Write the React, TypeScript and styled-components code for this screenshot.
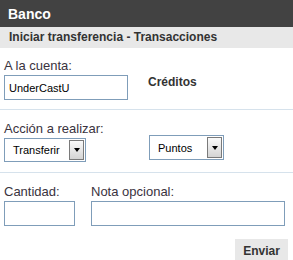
import styled, { createGlobalStyle } from 'styled-components';

const GlobalStyle = createGlobalStyle`
  body {
    margin: 0;
    background: #fff;
    font-family: 'Liberation Sans', Arial, sans-serif;
  }
`;

const Panel = styled.div`
  width: 293px;
  height: 260px;
  overflow: hidden;
  background: #fff;
`;

const Header = styled.div`
  height: 27px;
  line-height: 28px;
  padding-left: 8px;
  background: #424242;
  color: #fff;
  font-size: 14px;
  font-weight: bold;
`;

const SubHeader = styled.div`
  height: 21px;
  line-height: 21px;
  padding-left: 9px;
  background: #e8e8e8;
  color: #333;
  font-size: 12px;
  font-weight: bold;
`;

const Section = styled.div<{ $pad: string; $last?: boolean }>`
  padding: ${({ $pad }) => $pad};
  border-bottom: ${({ $last }) => ($last ? 'none' : '1px solid #d6e2ec')};
  display: flex;
  align-items: flex-end;
`;

const Field = styled.div<{ $width: number }>`
  display: flex;
  flex-direction: column;
  width: ${({ $width }) => $width}px;
  flex-shrink: 0;
`;

const Label = styled.label`
  font-size: 13px;
  line-height: 16px;
  color: #3a3340;
  margin-bottom: 1px;
`;

const Input = styled.input<{ $width: number }>`
  box-sizing: border-box;
  width: ${({ $width }) => $width}px;
  height: 25px;
  border: 1px solid #7f9db9;
  padding: 0 4px;
  font-family: 'Liberation Sans', Arial, sans-serif;
  font-size: 11px;
  color: #000;
  outline: none;
`;

const Strong = styled.div`
  font-size: 12px;
  font-weight: bold;
  color: #333;
  align-self: center;
  margin-top: 6px;
`;

const SelectBox = styled.div<{ $width: number; $height: number; $lift: number }>`
  box-sizing: border-box;
  width: ${({ $width }) => $width}px;
  height: ${({ $height }) => $height}px;
  margin-bottom: ${({ $lift }) => $lift}px;
  border: 1px solid #7f9db9;
  display: flex;
  align-items: stretch;
  padding: 1px;
  font-size: 11px;
  color: #000;
`;

const SelectText = styled.span`
  flex: 1;
  display: flex;
  align-items: center;
  padding-left: 7px;
`;

const DropButton = styled.span`
  width: 15px;
  box-sizing: border-box;
  border: 1px solid #7a7a7a;
  background: linear-gradient(#fafafa, #d4d4d4);
  display: flex;
  align-items: center;
  justify-content: center;

  &::after {
    content: '';
    border-left: 3px solid transparent;
    border-right: 3px solid transparent;
    border-top: 4px solid #000;
  }
`;

const Footer = styled.div`
  display: flex;
  justify-content: flex-end;
  padding: 13px 5px 0 0;
`;

const Button = styled.button`
  width: 53px;
  height: 24px;
  border: none;
  background: #e8e8e8;
  color: #333;
  font-family: 'Liberation Sans', Arial, sans-serif;
  font-size: 12px;
  font-weight: bold;
`;

export default function App() {
  return (
    <Panel>
      <GlobalStyle />
      <Header>Banco</Header>
      <SubHeader>Iniciar transferencia - Transacciones</SubHeader>

      <Section $pad="10px 4px 9px">
        <Field $width={144}>
          <Label>A la cuenta:</Label>
          <Input $width={124} defaultValue="UnderCastU" />
        </Field>
        <Strong>Créditos</Strong>
      </Section>

      <Section $pad="11px 4px 10px">
        <Field $width={145}>
          <Label>Acción a realizar:</Label>
          <SelectBox $width={82} $height={24} $lift={0}>
            <SelectText>Transferir</SelectText>
            <DropButton />
          </SelectBox>
        </Field>
        <SelectBox $width={75} $height={25} $lift={2}>
          <SelectText>Puntos</SelectText>
          <DropButton />
        </SelectBox>
      </Section>

      <Section $pad="11px 4px 0" $last>
        <Field $width={87}>
          <Label>Cantidad:</Label>
          <Input $width={71} />
        </Field>
        <Field $width={194}>
          <Label>Nota opcional:</Label>
          <Input $width={194} />
        </Field>
      </Section>

      <Footer>
        <Button>Enviar</Button>
      </Footer>
    </Panel>
  );
}
